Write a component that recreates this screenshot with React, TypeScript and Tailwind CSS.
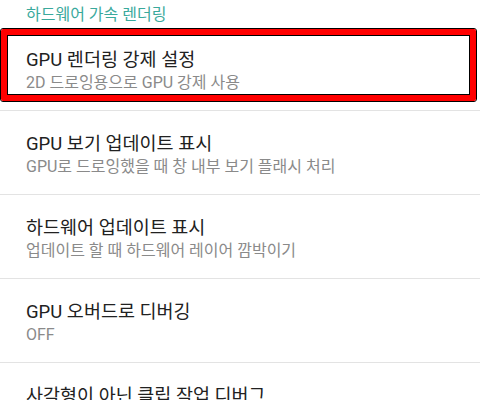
import React from "react";

const rows = [
  {title: "GPU 렌더링 강제 설정", sub: "2D 드로잉용으로 GPU 강제 사용", marked: true},
  {title: "GPU 보기 업데이트 표시", sub: "GPU로 드로잉했을 때 창 내부 보기 플래시 처리"},
  {title: "하드웨어 업데이트 표시", sub: "업데이트 할 때 하드웨어 레이어 깜박이기"},
  {title: "GPU 오버드로 디버깅", sub: "OFF"},
  {title: "사각형이 아닌 클립 작업 디버그", sub: "OFF"},
];

export default function App() {
  return (
    <div className="w-[480px] h-[400px] overflow-hidden bg-white font-['Roboto','Noto_Sans_CJK_KR',sans-serif]">
      <div className="h-[27px] pl-[26px] pt-[5px] text-[16px] leading-[20px] text-[#3aa99c]">
        하드웨어 가속 렌더링
      </div>
      {rows.map((r) => (
        <div key={r.title} className="relative h-[84px] border-b border-[#e3e3e3] flex flex-col justify-center pl-[26px] pt-[5px]">
          <div className="text-[18.5px] leading-[24px] text-[#212121]">{r.title}</div>
          <div className="text-[16px] leading-[22px] text-[#8a8a8a]">{r.sub}</div>
          {r.marked && (
            <div className="absolute left-0 top-[1px] w-[477px] h-[74px] rounded-[3px] border border-black">
              <div className="w-full h-full border-[6px] border-[#ff0000] rounded-[2px]">
                <div className="w-full h-full border border-black"></div>
              </div>
            </div>
          )}
        </div>
      ))}
    </div>
  );
}
